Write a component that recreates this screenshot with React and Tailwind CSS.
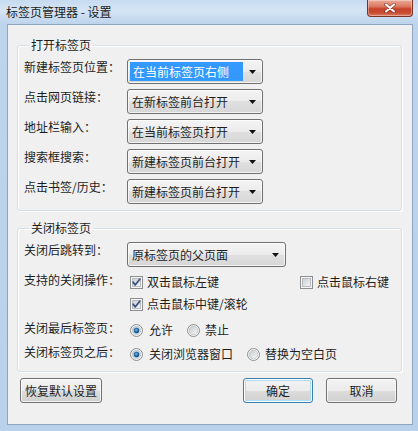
import React from "react";

function Arrow() {
  return (
    <svg width="7" height="4" viewBox="0 0 7 4">
      <path d="M0 0H7L3.5 4Z" fill="#111" />
    </svg>
  );
}

function Combo({ width, text, selected }) {
  return (
    <div
      className={`flex items-center h-[25px] ${width} rounded-[3px] border border-[#707070] bg-[linear-gradient(to_bottom,#f4f4f4_0%,#ececec_50%,#e0e0e0_50%,#d6d6d6_100%)] shadow-[inset_0_0_0_1px_rgba(255,255,255,0.7)]`}
    >
      {selected ? (
        <div className="ml-[2px] h-[19px] flex-1 bg-[#3399ff] text-white pl-[3px] leading-[19px]">
          {text}
        </div>
      ) : (
        <div className="flex-1 pl-[4px] text-[#1e1e1e] leading-[16px]">{text}</div>
      )}
      <div className="w-[19px] flex justify-center">
        <Arrow />
      </div>
    </div>
  );
}

function CheckBox({ checked }) {
  return (
    <svg width="13" height="13" viewBox="0 0 13 13" className="shrink-0">
      <defs>
        <linearGradient id="cbin" x1="0" y1="0" x2="1" y2="1">
          <stop offset="0" stopColor="#c9ced4" />
          <stop offset="1" stopColor="#f5f5f5" />
        </linearGradient>
      </defs>
      <rect x="0.5" y="0.5" width="12" height="12" fill="#f6f6f6" stroke="#8e8f8f" />
      <rect x="2.5" y="2.5" width="8" height="8" fill="url(#cbin)" stroke="#b9bdc2" />
      {checked && (
        <path
          d="M3.2 6.3 L5.3 8.8 L9.8 3.2"
          fill="none"
          stroke="#3d5180"
          strokeWidth="1.8"
          strokeLinecap="round"
          strokeLinejoin="round"
        />
      )}
    </svg>
  );
}

function Radio({ checked }) {
  return (
    <svg width="13" height="13" viewBox="0 0 13 13" className="shrink-0">
      <defs>
        <linearGradient id="rbin" x1="0" y1="0" x2="1" y2="1">
          <stop offset="0" stopColor="#c6cbd1" />
          <stop offset="1" stopColor="#f7f7f7" />
        </linearGradient>
        <radialGradient id="rdot" cx="0.45" cy="0.4" r="0.6">
          <stop offset="0" stopColor="#8fd0f5" />
          <stop offset="0.45" stopColor="#2d77b0" />
          <stop offset="1" stopColor="#1a4370" />
        </radialGradient>
      </defs>
      <circle cx="6.5" cy="6.5" r="6" fill="#f4f4f4" stroke="#8e8f8f" />
      <circle cx="6.5" cy="6.5" r="4.2" fill="url(#rbin)" stroke="#c0c4c8" strokeWidth="0.8" />
      {checked && (
        <>
          <circle cx="6.5" cy="6.5" r="3.6" fill="#a8d8f2" />
          <circle cx="6.5" cy="6.5" r="2.7" fill="url(#rdot)" />
        </>
      )}
    </svg>
  );
}

function Btn({ children, width, primary }) {
  return (
    <div
      className={`h-[25px] ${width} rounded-[3px] border flex items-center justify-center leading-[16px] text-[#1e1e1e] bg-[linear-gradient(to_bottom,#f3f3f3_0%,#ebebeb_50%,#dddddd_50%,#d0d0d0_100%)] ${
        primary
          ? "border-[#3c7fb1] shadow-[inset_0_0_0_1px_#ffffff,inset_0_0_0_2px_#aedcf5]"
          : "border-[#707070] shadow-[inset_0_0_0_1px_rgba(255,255,255,0.75)]"
      }`}
    >
      {children}
    </div>
  );
}

function Label({ children, extra }) {
  return <div className={`w-[103px] shrink-0 leading-[16px] text-[#1e1e1e] ${extra || ""}`}>{children}</div>;
}

export default function App() {
  return (
    <div className="w-[418px] h-[431px] overflow-hidden flex flex-col text-[12px] font-['Noto_Sans_CJK_SC',sans-serif] bg-[linear-gradient(to_bottom,#c6dbf0_0px,#d6e5f4_10px,#bdd4ec_24px,#b9d1ea_100%)]">
      {/* title bar */}
      <div className="h-[24px] flex items-center shrink-0">
        <div className="pl-[6px] text-[#1a1a1a] leading-[16px]">标签页管理器 - 设置</div>
        <div className="ml-auto mr-[5px] self-start w-[46px] h-[17px] rounded-b-[4px] border border-t-0 border-[#7a3226] bg-[linear-gradient(to_bottom,#eba997_0%,#dc7a62_40%,#c7432b_55%,#c84b32_80%,#de8063_100%)] shadow-[inset_0_0_0_1px_rgba(255,255,255,0.35)] flex items-center justify-center">
          <svg width="12" height="10" viewBox="0 0 12 10">
            <path d="M2 1.5 L10 8.5 M10 1.5 L2 8.5" stroke="#5b1d12" strokeWidth="3.6" strokeLinecap="round" opacity="0.55" />
            <path d="M2 1.5 L10 8.5 M10 1.5 L2 8.5" stroke="#ffffff" strokeWidth="2" strokeLinecap="round" />
          </svg>
        </div>
      </div>

      {/* client area */}
      <div className="ml-[7px] mr-[5px] h-[401px] shrink-0 border border-[#8fa5bf] bg-[#f0f0f0] flex flex-col">
        {/* group 1 */}
        <fieldset className="mt-[12px] ml-[9px] w-[385px] border border-[#d5dfe5] rounded-[3px] shadow-[inset_1px_1px_0_#ffffff,1px_1px_0_#ffffff] pl-[6px] pb-[6px]">
          <legend className="ml-[5px] px-[2px] leading-[16px] text-[#1e1e1e]">打开标签页</legend>
          <div className="flex flex-col gap-[5px] pt-[6px]">
            <div className="flex items-start h-[25px]">
              <Label>新建标签页位置：</Label>
              <Combo width="w-[136px]" text="在当前标签页右侧" selected />
            </div>
            <div className="flex items-start h-[25px]">
              <Label>点击网页链接：</Label>
              <Combo width="w-[136px]" text="在新标签前台打开" />
            </div>
            <div className="flex items-start h-[25px]">
              <Label>地址栏输入：</Label>
              <Combo width="w-[136px]" text="在当前标签页打开" />
            </div>
            <div className="flex items-start h-[25px]">
              <Label>搜索框搜索：</Label>
              <Combo width="w-[136px]" text="新建标签页前台打开" />
            </div>
            <div className="flex items-start h-[25px]">
              <Label>点击书签/历史：</Label>
              <Combo width="w-[136px]" text="新建标签页前台打开" />
            </div>
          </div>
        </fieldset>

        {/* group 2 */}
        <fieldset className="mt-[9px] ml-[9px] w-[385px] border border-[#d5dfe5] rounded-[3px] shadow-[inset_1px_1px_0_#ffffff,1px_1px_0_#ffffff] pl-[6px] pb-[6px]">
          <legend className="ml-[5px] px-[2px] leading-[16px] text-[#1e1e1e]">关闭标签页</legend>
          <div className="flex flex-col pt-[6px]">
            <div className="flex items-start h-[25px]">
              <Label>关闭后跳转到：</Label>
              <Combo width="w-[159px]" text="原标签页的父页面" />
            </div>
            <div className="flex items-center h-[22px] mt-[4px]">
              <Label extra="pb-[4px]">支持的关闭操作：</Label>
              <div className="ml-[3px] w-[170px] flex items-center gap-[4px]">
                <CheckBox checked />
                <span className="leading-[16px] text-[#1e1e1e]">双击鼠标左键</span>
              </div>
              <div className="flex items-center gap-[4px]">
                <CheckBox />
                <span className="leading-[16px] text-[#1e1e1e]">点击鼠标右键</span>
              </div>
            </div>
            <div className="flex items-center h-[22px] pl-[106px] gap-[4px]">
              <CheckBox checked />
              <span className="leading-[16px] text-[#1e1e1e]">点击鼠标中键/滚轮</span>
            </div>
            <div className="flex items-center h-[22px] mt-[4px]">
              <Label extra="pb-[4px]">关闭最后标签页：</Label>
              <div className="ml-[3px] w-[57px] flex items-center gap-[6px]">
                <Radio checked />
                <span className="leading-[16px] text-[#1e1e1e]">允许</span>
              </div>
              <div className="flex items-center gap-[5px]">
                <Radio />
                <span className="leading-[16px] text-[#1e1e1e]">禁止</span>
              </div>
            </div>
            <div className="flex items-center h-[22px] mt-[2px]">
              <Label extra="pb-[4px]">关闭标签页之后：</Label>
              <div className="ml-[3px] w-[117px] flex items-center gap-[6px]">
                <Radio checked />
                <span className="leading-[16px] text-[#1e1e1e]">关闭浏览器窗口</span>
              </div>
              <div className="flex items-center gap-[5px]">
                <Radio />
                <span className="leading-[16px] text-[#1e1e1e]">替换为空白页</span>
              </div>
            </div>
          </div>
        </fieldset>

        {/* buttons */}
        <div className="mt-[6px] flex items-center pl-[12px] pr-[15px]">
          <Btn width="w-[82px]">恢复默认设置</Btn>
          <div className="ml-auto flex gap-[13px]">
            <Btn width="w-[70px]" primary>
              确定
            </Btn>
            <Btn width="w-[71px]">取消</Btn>
          </div>
        </div>
      </div>
    </div>
  );
}
